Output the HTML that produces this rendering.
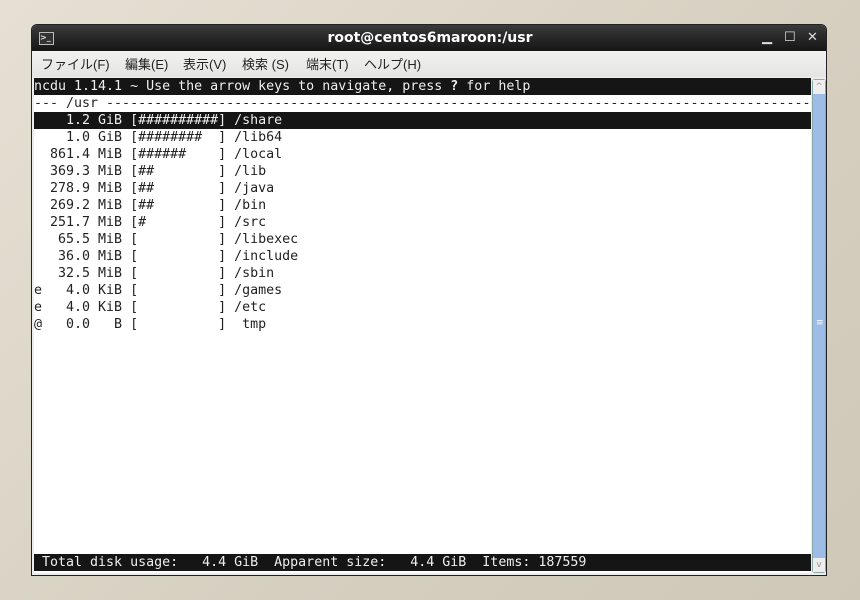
<!DOCTYPE html>
<html><head><meta charset="utf-8"><style>
body{margin:0;width:860px;height:600px;overflow:hidden;background:linear-gradient(135deg,#e6e0d4,#d6cfc0 60%,#cfc8b8);font-family:"DejaVu Sans","Liberation Sans","Noto Sans CJK JP",sans-serif}
.win{position:absolute;left:31px;top:24px;width:796px;height:552px;background:#ededeb;border:1px solid #222;border-radius:6px 6px 0 0;overflow:hidden;box-sizing:border-box}
.title{position:absolute;left:0;top:0;width:796px;height:26px;background:linear-gradient(#3a3a3a,#151515);color:#fff;font-weight:bold;font-size:14px;text-align:center;line-height:26px}
.ticon{position:absolute;left:7px;top:7px;width:13px;height:11px;border:1px solid #bbb;background:#333;font-size:8px;line-height:10px;text-align:left;color:#ddd}
.ctl{position:absolute;top:0;color:#ddd;font-size:13px;line-height:26px}
.menu{position:absolute;left:0;top:26px;width:796px;height:26px;font-size:13px;line-height:26px;color:#222;background:linear-gradient(#f2f2f0,#e4e4e2);font-family:"Liberation Sans","Noto Sans CJK JP",sans-serif}
.menu span{position:absolute;top:1px}
.term{position:absolute;left:2px;top:53px;width:777px;height:495px;background:#fff;font-family:"DejaVu Sans Mono","Liberation Mono",monospace;font-size:13.3px;line-height:17px;white-space:pre;color:#222}
.term div{height:17px}
.inv{background:#151515;color:#eee}
.sb{position:absolute;left:780px;top:54px;width:14px;height:494px;background:#9dbde6;border:1px solid #8aa;box-sizing:border-box;border-radius:3px}
.sb .a{position:absolute;left:0;width:12px;height:14px;background:#eee;color:#999;font-size:9px;text-align:center;line-height:14px}
</style></head><body>
<div class="win">
<div class="title"><div class="ticon">&gt;_</div>root@centos6maroon:/usr
<span class="ctl" style="left:730px">▁</span><span class="ctl" style="left:752px">☐</span><span class="ctl" style="left:775px">✕</span></div>
<div class="menu"><span style="left:9px">ファイル(F)</span><span style="left:93px">編集(E)</span><span style="left:151px">表示(V)</span><span style="left:210px">検索 (S)</span><span style="left:274px">端末(T)</span><span style="left:332px">ヘルプ(H)</span></div>
<div class="term"><div class="inv">ncdu 1.14.1 ~ Use the arrow keys to navigate, press <b>?</b> for help            </div><div>--- /usr -----------------------------------------------------------------------------------------</div><div class="inv">    1.2 GiB [##########] /share                                                                    </div><div>    1.0 GiB [########  ] /lib64</div><div>  861.4 MiB [######    ] /local</div><div>  369.3 MiB [##        ] /lib</div><div>  278.9 MiB [##        ] /java</div><div>  269.2 MiB [##        ] /bin</div><div>  251.7 MiB [#         ] /src</div><div>   65.5 MiB [          ] /libexec</div><div>   36.0 MiB [          ] /include</div><div>   32.5 MiB [          ] /sbin</div><div>e   4.0 KiB [          ] /games</div><div>e   4.0 KiB [          ] /etc</div><div>@   0.0   B [          ]  tmp</div><div></div><div></div><div></div><div></div><div></div><div></div><div></div><div></div><div></div><div></div><div></div><div></div><div></div><div class="inv"> Total disk usage:   4.4 GiB  Apparent size:   4.4 GiB  Items: 187559                                 </div></div>
<div class="sb"><div class="a" style="top:0">^</div><div class="a" style="bottom:0">v</div><div style="position:absolute;top:238px;left:3px;color:#fff;font-size:9px">≡</div></div>
</div>
</body></html>
